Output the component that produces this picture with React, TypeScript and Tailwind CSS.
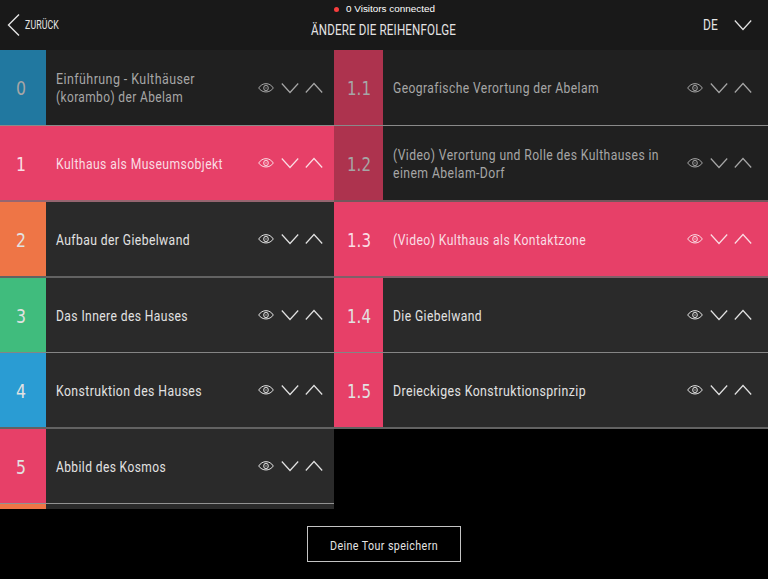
import type { ReactNode } from 'react';

type Item = {
  id: string;
  lines: string[];
  widths: number[];
  color: string;
  active?: boolean;
  faded?: boolean;
  height: string;
  border: string;
};

const chapters: Item[] = [
  { id: '0', lines: ['Einführung - Kulthäuser', '(korambo) der Abelam'], widths: [139, 127], color: 'bg-[#2178a0]', faded: true, height: 'h-[76px]', border: 'border-b border-[#8a8a8a]' },
  { id: '1', lines: ['Kulthaus als Museumsobjekt'], widths: [167], color: 'bg-[#e74068]', active: true, height: 'h-[76px]', border: 'border-b-2 border-[#966570]' },
  { id: '2', lines: ['Aufbau der Giebelwand'], widths: [134], color: 'bg-[#ee7546]', height: 'h-[76px]', border: 'border-b-2 border-[#626262]' },
  { id: '3', lines: ['Das Innere des Hauses'], widths: [132], color: 'bg-[#40bc7d]', height: 'h-[75px]', border: 'border-b border-[#858585]' },
  { id: '4', lines: ['Konstruktion des Hauses'], widths: [146], color: 'bg-[#2a9cd3]', height: 'h-[76px]', border: 'border-b-2 border-[#626262]' },
  { id: '5', lines: ['Abbild des Kosmos'], widths: [110], color: 'bg-[#e74068]', height: 'h-[75px]', border: 'border-b border-[#929292]' },
];

const pages: Item[] = [
  { id: '1.1', lines: ['Geografische Verortung der Abelam'], widths: [206], color: 'bg-[#ad334e]', faded: true, height: 'h-[76px]', border: 'border-b border-[#8a8a8a]' },
  { id: '1.2', lines: ['(Video) Verortung und Rolle des Kulthauses in', 'einem Abelam-Dorf'], widths: [266, 112], color: 'bg-[#ad334e]', faded: true, height: 'h-[76px]', border: 'border-b-2 border-[#75565c]' },
  { id: '1.3', lines: ['(Video) Kulthaus als Kontaktzone'], widths: [193], color: 'bg-[#e74068]', active: true, height: 'h-[76px]', border: 'border-b-2 border-[#806069]' },
  { id: '1.4', lines: ['Die Giebelwand'], widths: [89], color: 'bg-[#e74068]', height: 'h-[75px]', border: 'border-b border-[#858585]' },
  { id: '1.5', lines: ['Dreieckiges Konstruktionsprinzip'], widths: [193], color: 'bg-[#e74068]', height: 'h-[76px]', border: 'border-b-2 border-[#626262]' },
];

type LineProps = {
  width: number;
  size?: number;
  height?: number;
  font?: string;
  tracking?: number;
  children: ReactNode;
};

/* A single line of condensed type, set to a fixed measure. */
function Line({ width, size = 14.6, height = 18, font = 'Roboto', tracking = 0.5, children }: LineProps) {
  return (
    <svg className="block shrink-0 overflow-visible" width={width} height={height}>
      <text
        x="0"
        y={height / 2 + size * 0.357}
        fontSize={size}
        letterSpacing={tracking}
        fontFamily={`${font}, "Liberation Sans", sans-serif`}
        textLength={width}
        lengthAdjust="spacingAndGlyphs"
        fill="currentColor"
      >
        {children}
      </text>
    </svg>
  );
}

function Chevron({ up = false }: { up?: boolean }) {
  return (
    <svg width="18" height="12" viewBox="0 0 18 12" fill="none" stroke="currentColor" strokeWidth="1.2" className="block">
      <path d={up ? 'M.8 10.5 9 1.5l8.2 9' : 'M.8 1.5 9 10.5l8.2-9'} />
    </svg>
  );
}

function Eye() {
  return (
    <svg width="16" height="12" viewBox="0 0 16 12" fill="none" stroke="currentColor" strokeWidth="1" className="block">
      <path d="M.7 6C4.2.2 11.8.2 15.3 6 11.8 11.3 4.2 11.3.7 6Z" />
      <ellipse cx="8" cy="6" rx="2.3" ry="2.8" />
      <path d="M8 4.7v2.6" strokeWidth=".6" />
    </svg>
  );
}

function Row({ item, sub = false }: { item: Item; sub?: boolean }) {
  const text = item.active ? 'text-[#fadde4]' : item.faded ? 'text-[#a6a6a6]' : 'text-[#e2e2e2]';
  const body = item.active ? 'bg-[#e74068]' : item.faded ? 'bg-[#202020]' : 'bg-[#2a2a2a]';
  return (
    <div className={`flex w-full shrink-0 ${item.height} ${item.border} ${body} ${text}`}>
      <div className={`flex shrink-0 items-center justify-center pt-px ${sub ? 'w-[49px]' : 'w-[46px] pr-1'} ${item.color}`}>
        <Line width={sub ? 24 : 10} size={18.6} height={22} font="DejaVu Sans" tracking={0}>
          {item.id}
        </Line>
      </div>
      <div className="flex min-w-0 flex-1 flex-col justify-center pl-2.5 pt-px">
        {item.lines.map((line, i) => (
          <Line key={line} width={item.widths[i]}>
            {line}
          </Line>
        ))}
      </div>
      <div className={`flex shrink-0 items-center ${sub ? 'pr-4' : 'pr-[11px]'}`}>
        <Eye />
        <span className="ml-[7px]"><Chevron /></span>
        <span className="ml-1.5"><Chevron up /></span>
      </div>
    </div>
  );
}

export default function App() {
  return (
    <div className="flex h-[579px] w-[768px] flex-col overflow-hidden bg-black text-[#e4e4e4]">
      <header className="grid h-[50px] shrink-0 grid-cols-[1fr_146px_1fr] bg-[#191919]">
        <button className="flex items-center gap-[5px] pl-[7px]">
          <svg width="13" height="24" viewBox="0 0 13 24" fill="none" stroke="currentColor" strokeWidth="1.4">
            <path d="M12 1.5 1.5 12 12 22.5" />
          </svg>
          <Line width={34} size={12.4} tracking={0.2}>ZURÜCK</Line>
        </button>
        <div className="flex flex-col items-center pt-[3px]">
          <div className="flex items-center gap-[7px] pl-px text-white">
            <span className="size-[5px] rounded-full bg-[#f83e3e]" />
            <Line width={89} size={9.6} height={12} font="Liberation Sans" tracking={0}>0 Visitors connected</Line>
          </div>
          <div className="pt-1.5 pr-px">
            <Line width={145} size={15} tracking={0.2}>ÄNDERE DIE REIHENFOLGE</Line>
          </div>
        </div>
        <button className="flex items-center justify-end gap-4 pr-4">
          <Line width={15} size={15} tracking={0.2}>DE</Line>
          <Chevron />
        </button>
      </header>
      <main className="flex h-[459px] shrink-0 overflow-hidden">
        <section className="flex w-[334px] shrink-0 flex-col overflow-hidden">
          {chapters.map((c) => <Row key={c.id} item={c} />)}
          <div className="flex h-1.5 shrink-0 bg-[#2a2a2a]"><div className="w-[46px] bg-[#ee7546]" /></div>
        </section>
        <section className="flex flex-1 flex-col">
          {pages.map((p) => <Row key={p.id} item={p} sub />)}
        </section>
      </main>
      <footer className="flex flex-1 justify-center pt-[17px]">
        <button className="flex h-9 w-[154px] items-center justify-center border border-[#c4c4c4] pt-px">
          <Line width={108} size={13.6}>Deine Tour speichern</Line>
        </button>
      </footer>
    </div>
  );
}
